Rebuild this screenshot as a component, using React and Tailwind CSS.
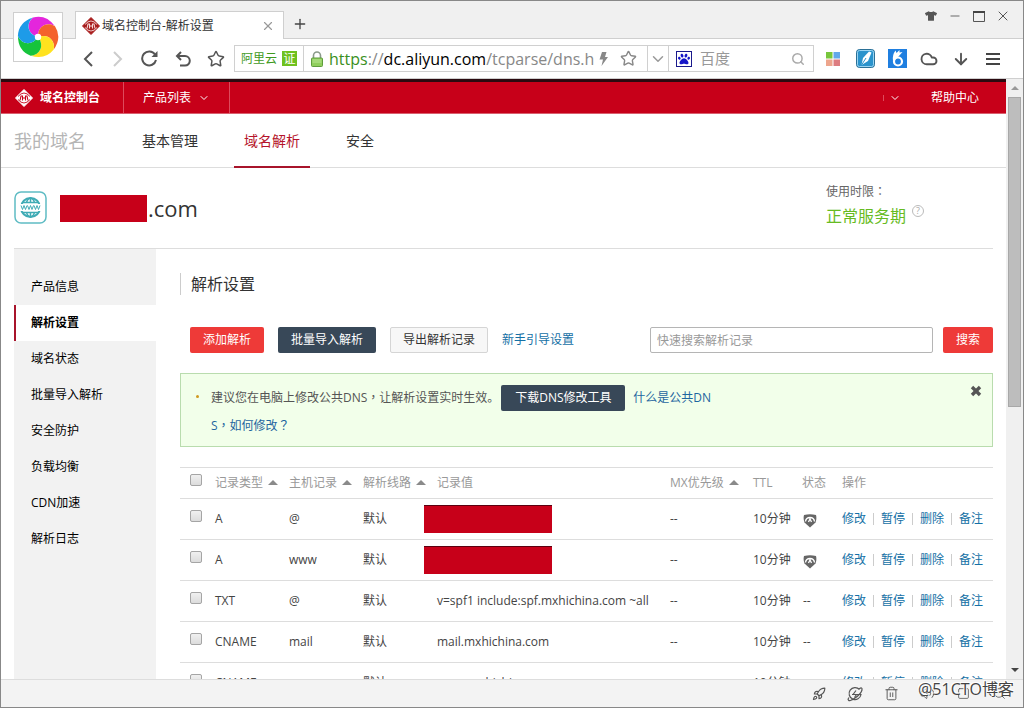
import React from "react";
import {
  ChevronDown, ChevronLeft, ChevronRight, Cloud, ArrowDown, Menu, Minus, Plus,
  RotateCw, Search, Square, Star, Trash2, Rocket, Volume2, X,
} from "lucide-react";
import { FaPaw, FaTshirt } from "react-icons/fa";

const SIDE_ITEMS = ["产品信息", "解析设置", "域名状态", "批量导入解析", "安全防护", "负载均衡", "CDN加速", "解析日志"];

const RECORDS = [
  { id: 1, type: "A", host: "@", hidden: true, shield: true },
  { id: 2, type: "A", host: "www", hidden: true, shield: true },
  { id: 3, type: "TXT", host: "@", value: "v=spf1 include:spf.mxhichina.com ~all" },
  { id: 4, type: "CNAME", host: "mail", value: "mail.mxhichina.com" },
  { id: 5, type: "CNAME", host: "pop", value: "www.mxhichina.com" },
];

const ACTIONS = ["修改", "暂停", "删除", "备注"];

const PETALS = ["#e426dc", "#f4622c", "#ffe21f", "#16c43c", "#1e9be8"];

function Pinwheel() {
  return (
    <svg viewBox="-21 -21 42 42" className="size-[42px]">
      {PETALS.map((c, i) => (
        <path key={c} fill={c} transform={`rotate(${i * 72})`} d="M0 0C-11 -3 -12 -14 -5 -19.500Q8 -23 17 -10.800C9.600 -15.700 -0.500 -11.400 0 0Z" />
      ))}
      <circle r="3.200" fill="#fff" />
    </svg>
  );
}

function SiteMark({ fg, bg }) {
  return (
    <svg viewBox="0 0 18 18" className="size-[18px] shrink-0">
      <path d="M9 0.500L17.500 9L9 17.500L0.500 9Z" fill={fg} stroke={fg} strokeLinejoin="round" />
      <path d="M3 7.500Q9 0.500 15 7.500M3 10.500Q9 17.500 15 10.500" stroke={bg} strokeWidth="0.900" fill="none" />
      <path d="M5 11.500L6 7H7.500V11.500M10.500 11.500V7H12L13 11.500M7.500 9H10.500" stroke={bg} strokeWidth="1.100" fill="none" />
    </svg>
  );
}

function Lock() {
  return (
    <svg viewBox="0 0 12 16" className="h-4 w-3 shrink-0">
      <path d="M2.500 8V4.500a3.500 3.500 0 0 1 7 0V8" fill="none" stroke="#8a9a8a" strokeWidth="1.600" />
      <rect x="0.500" y="7" width="11" height="8.500" rx="1" fill="#8fce5c" stroke="#5f9d3c" />
      <path d="M1.500 9h9M1.500 11h9" stroke="#b9e594" />
    </svg>
  );
}

function GlobeBadge() {
  return (
    <svg viewBox="0 0 34 34" className="size-[34px] shrink-0">
      <rect x="1" y="1" width="31" height="31" rx="6" fill="#fff" stroke="#5fbcc4" strokeWidth="1.500" />
      <circle cx="16.500" cy="16.500" r="9.500" fill="none" stroke="#3fabb5" strokeWidth="2" />
      <path d="M9 11.500H24M9 21.500H24M16.500 7V12M16.500 21V26M12.500 12Q13 8 16.500 7Q20 8 20.500 12M12.500 21Q13 25 16.500 26Q20 25 20.500 21" fill="none" stroke="#3fabb5" strokeWidth="1.500" />
      <rect x="5.500" y="13" width="22" height="7" fill="#fff" />
      <path d="M7 14.500l1.500 4 1.500-4 1.500 4 1.500-4M13.500 14.500l1.500 4 1.500-4 1.500 4 1.500-4M20 14.500l1.500 4 1.500-4 1.500 4 1.500-4" fill="none" stroke="#3fabb5" />
    </svg>
  );
}

function Shield() {
  return (
    <svg viewBox="0 0 14 14" className="mt-[3px] size-[14px]" aria-label="防护">
      <path d="M1 1Q7 -0.500 13 1Q14 5 12.500 8.500L7 13.500L1.500 8.500Q0 5 1 1Z" fill="#666" />
      <path d="M2.500 7.500Q3 3.500 7 3.500T11.500 7.500M5.500 8L7 5L8.500 8" stroke="#fff" strokeWidth="1.300" fill="none" />
    </svg>
  );
}

function SortArrow() {
  return (
    <svg viewBox="0 0 10 5" className="mb-[2px] ml-[5px] inline-block h-[5px] w-[10px] align-middle">
      <path d="M0 5L5 0L10 5Z" fill="#8a8a8a" />
    </svg>
  );
}

// full-width marks centred in their cell
function Mark({ children }) {
  return <span className="font-['Noto_Sans_CJK_TC',sans-serif]" lang="zh-TW">{children}</span>;
}

function Tick({ label }) {
  return (
    <input
      type="checkbox"
      aria-label={label}
      className="mb-[6px] block size-3 appearance-none rounded-xs border border-[#a5a5a5] bg-linear-to-b from-[#f0f0f0] to-[#dcdcdc] checked:bg-[#1470a5]"
    />
  );
}

function Tool({ label, className = "w-8", children }) {
  return (
    <button aria-label={label} className={`flex h-7 shrink-0 items-center justify-center text-[#555] ${className}`}>
      {children}
    </button>
  );
}

function BrowserChrome() {
  return (
    <header className="relative shrink-0">
      <div className="flex h-[38px] items-end border-b border-[#cfcfcf] bg-[#f0f0f0] pl-[74px]">
        <div className="-mb-px flex h-7 w-[209px] items-center border border-b-0 border-[#cfcfcf] bg-white pr-2 pl-[6px] text-xs text-[#333]">
          <SiteMark fg="#a81c1c" bg="#f4dada" />
          <span className="ml-[2px] flex-1">域名控制台-解析设置</span>
          <button aria-label="关闭标签" className="pl-1 text-[#999]"><X size={14} /></button>
        </div>
        <button aria-label="新标签" className="ml-2 flex h-7 items-center text-[#444]"><Plus size={16} /></button>
        <div className="mb-2 ml-auto flex items-center pr-2 text-[#555]">
          <Tool label="皮肤" className="w-6"><FaTshirt size={12} /></Tool>
          <Tool label="最小化" className="w-6"><Minus size={14} strokeWidth={1.5} /></Tool>
          <Tool label="最大化" className="w-6">
            <svg viewBox="0 0 12 11" className="h-[11px] w-3"><path d="M0.500 1V10.500H11.500V1" fill="none" stroke="#555" /><path d="M0 1H12" stroke="#444" strokeWidth="2" /></svg>
          </Tool>
          <Tool label="关闭" className="w-6"><X size={16} strokeWidth={1.5} /></Tool>
        </div>
      </div>

      <div className="flex h-10 items-center border-b border-[#cfcfcf] bg-white pr-[14px] pl-[72px]">
        <Tool label="后退" className="w-[30px]">
          <svg viewBox="0 0 10 16" className="h-4 w-[10px]"><path d="M9 1L2 8L9 15" fill="none" stroke="#555" strokeWidth="2" /></svg>
        </Tool>
        <Tool label="前进" className="w-[30px]">
          <svg viewBox="0 0 10 16" className="h-4 w-[10px]"><path d="M1 1L8 8L1 15" fill="none" stroke="#ccc" strokeWidth="2" /></svg>
        </Tool>
        <Tool label="刷新" className="w-[33px]">
          <svg viewBox="0 0 17 17" className="size-[17px]"><path d="M14 4.500A7 7 0 1 0 15 10" fill="none" stroke="#555" strokeWidth="2" /><path d="M16.500 1V7H10.500Z" fill="#555" /></svg>
        </Tool>
        <Tool label="恢复" className="w-[33px]">
          <svg viewBox="0 0 16 16" className="size-4"><path d="M6 1L2 5L6 9M2 5H10A4.800 4.800 0 0 1 10 14.600H5" fill="none" stroke="#555" strokeWidth="2" /></svg>
        </Tool>
        <Tool label="收藏" className="w-[33px]"><Star size={18} strokeWidth={2} strokeLinejoin="miter" /></Tool>

        <div className="mr-[3px] ml-[2px] flex h-[27px] min-w-0 flex-1 items-center border border-[#d0d0d0]">
          <div className="flex h-full items-center gap-[5px] border-r border-[#d0d0d0] px-[6px] text-xs text-[#3f9a1d]">
            阿里云
            <span className="flex size-[15px] items-center justify-center bg-[#6fc11e] text-white">证</span>
          </div>
          <div className="flex min-w-0 flex-1 items-center pl-[7px]">
            <Lock />
            <div className="ml-[6px] min-w-0 flex-1 overflow-hidden text-base whitespace-nowrap text-[#888]">
              <span className="text-[#3a8f22]">https</span>://<span className="text-black">dc.aliyun.com</span>/tcparse/dns.h
            </div>
            <svg viewBox="0 0 9 14" className="mr-3 ml-[2px] h-[14px] w-[9px] shrink-0"><path d="M3 0H7.500L6 5H9L2.500 14L4 7.500H0.500Z" fill="#888" /></svg>
            <button aria-label="加入收藏" className="mr-[10px] shrink-0 text-[#888]"><Star size={17} strokeWidth={2} strokeLinejoin="miter" /></button>
          </div>
          <button aria-label="搜索引擎" className="flex h-full w-[22px] shrink-0 items-center justify-center border-x border-[#d0d0d0] text-[#999]">
            <ChevronDown size={18} />
          </button>
          <form className="flex w-[144px] shrink-0 items-center pr-[8px] pl-[7px]">
            <span className="flex size-4 shrink-0 items-center justify-center border border-[#1a1a8c] bg-white text-[#1414c8]">
              <FaPaw size={12} />
            </span>
            <input aria-label="百度搜索" placeholder="百度" className="ml-2 min-w-0 flex-1 text-[15px] outline-none placeholder:text-[#999]" />
            <button aria-label="搜索" type="button" className="text-[#aaa]"><Search size={14} strokeWidth={2.5} /></button>
          </form>
        </div>

        <Tool label="应用">
          <svg viewBox="0 0 14 14" className="size-[14px]">
            <path d="M0 0H6.500V6.500H0Z" fill="#78c63c" /><path d="M7.500 0H14V6.500H7.500Z" fill="#62a8ea" />
            <path d="M0 7.500H6.500V14H0Z" fill="#eda58c" /><path d="M7.500 7.500H14V14H7.500Z" fill="#dd7c80" />
          </svg>
        </Tool>
        <Tool label="笔记">
          <svg viewBox="0 0 19 19" className="size-[19px]">
            <rect x="0.500" y="0.500" width="18" height="18" rx="3" fill="#2a93cc" stroke="#2b7096" />
            <rect x="1.500" y="1.500" width="16" height="16" rx="2" fill="none" stroke="#9ad4f2" />
            <path d="M5.500 16L7 9L13 2.500L15.500 3.500L12 12Z" fill="#fff" /><path d="M5.500 16L10 9" stroke="#2a93cc" />
          </svg>
        </Tool>
        <Tool label="助手">
          <svg viewBox="0 0 19 19" className="size-[19px]">
            <path d="M0 0H19V19H0Z" fill="#1f7fe0" />
            <circle cx="10" cy="12.500" r="4" fill="none" stroke="#fff" strokeWidth="2.200" />
            <path d="M5 12Q4 6 7.500 1.500L8.500 4L11.500 1L11.500 3.500L14.500 3L10.500 7.500L7 11Z" fill="#fff" />
          </svg>
        </Tool>
        <Tool label="云"><Cloud size={18} strokeWidth={2.5} /></Tool>
        <Tool label="下载"><ArrowDown size={18} strokeWidth={2.5} /></Tool>
        <Tool label="菜单">
          <svg viewBox="0 0 14 12" className="h-3 w-[14px]"><path d="M0 1H14M0 6H14M0 11H14" stroke="#444" strokeWidth="2" /></svg>
        </Tool>
      </div>

      <div className="absolute top-[11px] left-3 flex size-[50px] items-center justify-center border border-[#cfcfcf] bg-white">
        <Pinwheel />
      </div>
    </header>
  );
}

function TopBar() {
  return (
    <div className="flex h-[35px] items-center border-t-3 border-b border-t-[#2a0a10] border-b-[#d9606f] bg-[#c70019] text-xs text-white">
      <a href="#home" className="flex h-full w-[123px] items-center gap-[7px] border-r border-[#dd4a5c] pl-[14px] font-bold">
        <SiteMark fg="#fff" bg="#c70019" />
        域名控制台
      </a>
      <button className="flex h-full w-[106px] items-center gap-[7px] border-r border-[#dd4a5c] pl-[19px]">
        产品列表 <ChevronDown size={12} />
      </button>
      <button aria-label="账户" className="ml-auto flex h-full items-center gap-[5px] pr-[30px]">
        <span className="h-[6px] w-px bg-[#dd4a5c]" />
        <ChevronDown size={12} />
      </button>
      <a href="#help" className="mr-[27px]">帮助中心</a>
    </div>
  );
}

function SectionNav() {
  return (
    <nav className="flex h-[54px] items-stretch border-b border-[#ddd] pl-[13px] text-sm text-[#333]">
      <span className="flex w-[118px] items-center text-lg text-[#b5b5b5]">我的域名</span>
      <div className="flex gap-[26px]">
        <a href="#basic" className="flex items-center px-[10px]">基本管理</a>
        <a href="#dns" className="-mb-px flex items-center border-b-2 border-[#a8142b] px-[10px] pt-px text-[#b5142b]">域名解析</a>
        <a href="#safe" className="flex items-center px-[10px]">安全</a>
      </div>
    </nav>
  );
}

function DomainHead() {
  return (
    <div className="mx-[13px] flex h-[81px] items-center border-b border-[#ddd]">
      <GlobeBadge />
      <div className="ml-3 flex items-center text-[22px] text-[#333]">
        <span className="mr-px h-[27px] w-[87px] bg-[#c70019]" />
        .com
      </div>
      <div className="mr-[69px] mb-[6px] ml-auto">
        <div className="text-xs leading-5 text-[#666]">使用时限<Mark>：</Mark></div>
        <div className="flex items-start text-base leading-7 text-[#66bb22]">
          正常服务期
          <button aria-label="说明" className="mt-[3px] ml-[6px] flex size-3 items-center justify-center rounded-full border border-[#bbb] text-[9px] text-[#aaa]">?</button>
        </div>
      </div>
    </div>
  );
}

function SideMenu() {
  return (
    <aside className="w-[142px] shrink-0 bg-[#f2f2f2] pt-5 text-xs text-black">
      <ul>
        {SIDE_ITEMS.map((item) => (
          <li key={item}>
            <a
              href={`#${item}`}
              className={item === "解析设置"
                ? "flex h-9 items-center border-l-2 border-[#a8142b] bg-white pl-[15px] font-bold"
                : "flex h-9 items-center pl-[17px]"}
            >
              {item}
            </a>
          </li>
        ))}
      </ul>
    </aside>
  );
}

function Notice() {
  return (
    <div className="mt-5 flex h-[74px] items-start border border-[#b9dcae] bg-[#f2ffea] pt-[9px] pr-[8px] pl-[15px] text-xs">
      <span className="mt-[12px] mr-3 size-[3px] shrink-0 rounded-full bg-[#d09a20]" />
      <p className="w-[508px] leading-[27px] break-all text-[#555]">
        建议您在电脑上修改公共DNS<Mark>，</Mark>让解析设置实时生效。
        <button className="mr-2 ml-[2px] h-[26px] w-[124px] rounded-xs bg-[#384858] leading-[26px] text-white">下载DNS修改工具</button>
        <a href="#public-dns" className="text-[#1f66a0]">什么是公共DNS<Mark>，</Mark>如何修改<Mark>？</Mark></a>
      </p>
      <button aria-label="关闭提示" className="ml-auto text-[#555]"><X size={16} strokeWidth={5} strokeLinecap="butt" /></button>
    </div>
  );
}

function RecordTable() {
  return (
    <table className="mt-5 w-full table-fixed border-t border-[#ddd] text-left text-xs text-[#444]">
      <colgroup>
        <col className="w-[35px]" /><col className="w-[74px]" /><col className="w-[74px]" /><col className="w-[74px]" />
        <col /><col className="w-[83px]" /><col className="w-[49px]" /><col className="w-10" /><col className="w-[151px]" />
      </colgroup>
      <thead>
        <tr className="h-[31px] border-b border-[#ddd] whitespace-nowrap text-[#999] [&>th]:font-normal">
          <th className="pl-[10px]"><Tick label="全选" /></th>
          <th>记录类型<SortArrow /></th>
          <th>主机记录<SortArrow /></th>
          <th>解析线路<SortArrow /></th>
          <th>记录值</th>
          <th>MX优先级<SortArrow /></th>
          <th>TTL</th>
          <th>状态</th>
          <th>操作</th>
        </tr>
      </thead>
      <tbody>
        {RECORDS.map((r) => (
          <tr key={r.id} className="h-[41px] border-b border-[#ddd] whitespace-nowrap">
            <td className="pl-[10px]"><Tick label={`${r.type} ${r.host}`} /></td>
            <td>{r.type}</td>
            <td>{r.host}</td>
            <td>默认</td>
            <td>{r.hidden ? <div className="-ml-[13px] h-7 w-32 border-t border-[#5c0010] bg-[#c70019]" /> : r.value}</td>
            <td>--</td>
            <td>10分钟</td>
            <td className="pl-px">{r.shield ? <Shield /> : "--"}</td>
            <td>
              <div className="flex divide-x divide-[#ccc] leading-3">
                {ACTIONS.map((a) => (
                  <a key={a} href={`#${a}`} className="pr-[7px] pl-[7px] text-[#1470a5] first:pl-0 last:pr-0">{a}</a>
                ))}
              </div>
            </td>
          </tr>
        ))}
      </tbody>
    </table>
  );
}

function ScrollBar() {
  return (
    <div className="flex w-[17px] shrink-0 flex-col items-center bg-[#f0f0f0]">
      <svg viewBox="0 0 8 4" className="my-[7px] h-1 w-2 shrink-0"><path d="M0 4L4 0L8 4Z" fill="#999" /></svg>
      <div className="min-h-0 w-[13px] flex-1"><div className="h-[55%] border border-[#a8a8a8] bg-[#bdbdbd]" /></div>
      <svg viewBox="0 0 8 4" className="my-[7px] h-1 w-2 shrink-0"><path d="M0 0L4 4L8 0Z" fill="#444" /></svg>
    </div>
  );
}

function StatusBar() {
  return (
    <footer className="relative flex h-7 shrink-0 items-center justify-end border-t border-[#ddd] bg-[#f3f3f3] pr-[6px]">
      <Tool label="加速" className="w-9"><Rocket size={14} strokeWidth={2} /></Tool>
      <Tool label="内核" className="w-9">
        <svg viewBox="0 0 16 16" className="size-4" fill="none" stroke="#555" strokeWidth="1.200">
          <path d="M12.500 3.500A6 6 0 1 0 14 8.500H5M12 3Q15.500 0.500 15 4Q14 8 8 12T1.500 14Q0.500 13.500 2 11.500" /><path d="M9 4.500L6 8.500M9.500 8.500L7.500 11.500" />
        </svg>
      </Tool>
      <Tool label="清理" className="w-9"><Trash2 size={15} strokeWidth={1.5} /></Tool>
      <Tool label="声音" className="w-9"><Volume2 size={15} strokeWidth={1.5} /></Tool>
      <Tool label="窗口" className="w-9"><Square size={13} strokeWidth={1.5} /></Tool>
      <Tool label="缩放" className="w-9"><Search size={13} strokeWidth={1.5} /></Tool>
      <span className="absolute right-[9px] bottom-[6px] text-base leading-6 text-[#444] [text-shadow:-1px_-1px_0_#fff,1px_-1px_0_#fff]">@51CTO博客</span>
    </footer>
  );
}

export default function App() {
  return (
    <div className="flex h-screen flex-col overflow-hidden border border-[#888] bg-white font-['Open_Sans','Noto_Sans_CJK_SC',sans-serif]">
      <BrowserChrome />
      <div className="flex min-h-0 flex-1">
        <div className="flex min-w-0 flex-1 flex-col overflow-hidden">
          <TopBar />
          <SectionNav />
          <DomainHead />
          <div className="flex min-h-0 flex-1 px-[13px]">
            <SideMenu />
            <main className="min-w-0 flex-1 pt-6 pl-6">
              <h1 className="border-l border-[#ccc] pl-[10px] text-base leading-[22px] text-[#333]">解析设置</h1>
              <div className="mt-8 flex h-[26px] items-center pl-[10px] text-xs">
                <button className="h-full w-[74px] rounded-xs bg-[#ee3a38] text-white">添加解析</button>
                <button className="ml-[14px] h-full w-[98px] rounded-xs bg-[#384858] text-white">批量导入解析</button>
                <button className="ml-[14px] h-full w-[98px] rounded-xs border border-[#d5d5d5] bg-[#f7f7f7] text-[#333]">导出解析记录</button>
                <a href="#guide" className="ml-[14px] text-[#1470a5]">新手引导设置</a>
                <input aria-label="搜索解析记录" placeholder="快速搜索解析记录" className="ml-auto h-full w-[283px] rounded-xs border border-[#b5b5b5] px-[6px] outline-none placeholder:text-[#999]" />
                <button className="ml-[10px] h-full w-[50px] rounded-xs bg-[#ee3a38] text-white">搜索</button>
              </div>
              <Notice />
              <RecordTable />
            </main>
          </div>
        </div>
        <ScrollBar />
      </div>
      <StatusBar />
    </div>
  );
}
